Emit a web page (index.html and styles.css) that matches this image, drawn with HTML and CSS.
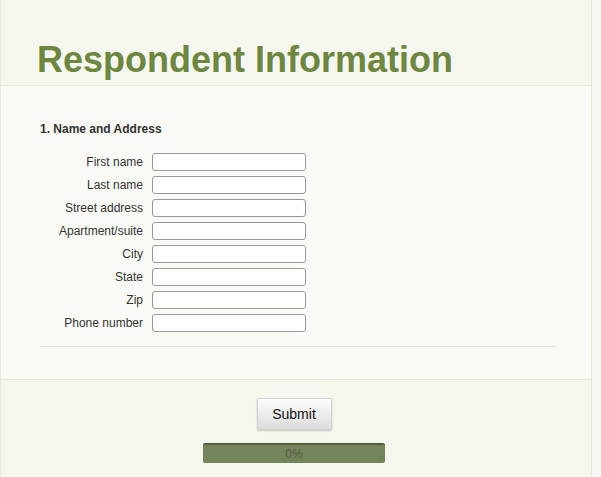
FILE: index.html
```html
<!DOCTYPE html>
<html lang="en">
<head>
    <meta charset="UTF-8">
    <title>Respondent Information</title>
    <link rel="stylesheet" href="styles.css">
</head>
<body>
    <div class="survey">
        <div class="survey-header">
            <h1>Respondent Information</h1>
        </div>

        <div class="survey-body">
            <div class="question">
                <p class="question-title">1. Name and Address</p>
                <div class="fields">
                    <label for="f1">First name</label><input id="f1" type="text">
                    <label for="f2">Last name</label><input id="f2" type="text">
                    <label for="f3">Street address</label><input id="f3" type="text">
                    <label for="f4">Apartment/suite</label><input id="f4" type="text">
                    <label for="f5">City</label><input id="f5" type="text">
                    <label for="f6">State</label><input id="f6" type="text">
                    <label for="f7">Zip</label><input id="f7" type="text">
                    <label for="f8">Phone number</label><input id="f8" type="text">
                </div>
            </div>
        </div>

        <div class="survey-footer">
            <button class="submit-button">Submit</button>
            <div class="progress">0%</div>
        </div>
    </div>
</body>
</html>
```

FILE: styles.css
```css
body {
    margin: 0;
    background-color: #f7f8f2;
    font-family: "Liberation Sans", Arial, sans-serif;
}
.survey {
    width: 590px;
    min-height: 477px;
    border-left: 1px solid #e8eadf;
    border-right: 1px solid #e4e6da;
    background-color: #f5f7ef;
}
.survey-header {
    box-sizing: border-box;
    height: 86px;
    border-bottom: 1px solid #e6e8dc;
    padding: 38px 0 0 36px;
}
h1 {
    margin: 0;
    font-size: 36px;
    font-weight: bold;
    color: #6d8640;
    line-height: 44px;
}
.survey-body {
    background-color: #f9faf5;
    border-bottom: 1px solid #e6e8dc;
    padding: 36px 35px 32px 39px;
}
.question {
    border-bottom: 1px solid #e3e4dc;
    padding-bottom: 14px;
}
.question-title {
    margin: 0 0 17px 0;
    font-size: 12px;
    font-weight: bold;
    color: #333;
}
.fields {
    display: grid;
    grid-template-columns: 103px 154px;
    column-gap: 9px;
    row-gap: 5px;
    align-items: center;
}
.fields label {
    text-align: right;
    font-size: 12px;
    color: #333;
}
.fields input {
    width: 154px;
    height: 18px;
    box-sizing: border-box;
    margin: 0;
    border: 1px solid #999;
    border-radius: 3px;
    background: #fff;
}
.survey-footer {
    display: flex;
    flex-direction: column;
    align-items: center;
    padding-top: 18px;
}
.submit-button {
    width: 75px;
    height: 32px;
    margin-right: 4px;
    font-family: "Liberation Sans", Arial, sans-serif;
    font-size: 14px;
    color: #111;
    background: linear-gradient(#fdfdfd, #dcdcdc);
    border: 1px solid #d2d2d2;
    border-radius: 2px;
    box-shadow: 0 1px 2px rgba(0, 0, 0, 0.2);
}
.progress {
    margin-top: 13px;
    margin-right: 4px;
    width: 182px;
    height: 20px;
    box-sizing: border-box;
    background-color: #76845c;
    border-top: 2px solid #55603f;
    border-radius: 2px;
    text-align: center;
    font-size: 12px;
    line-height: 18px;
    color: #525a44;
}
```
